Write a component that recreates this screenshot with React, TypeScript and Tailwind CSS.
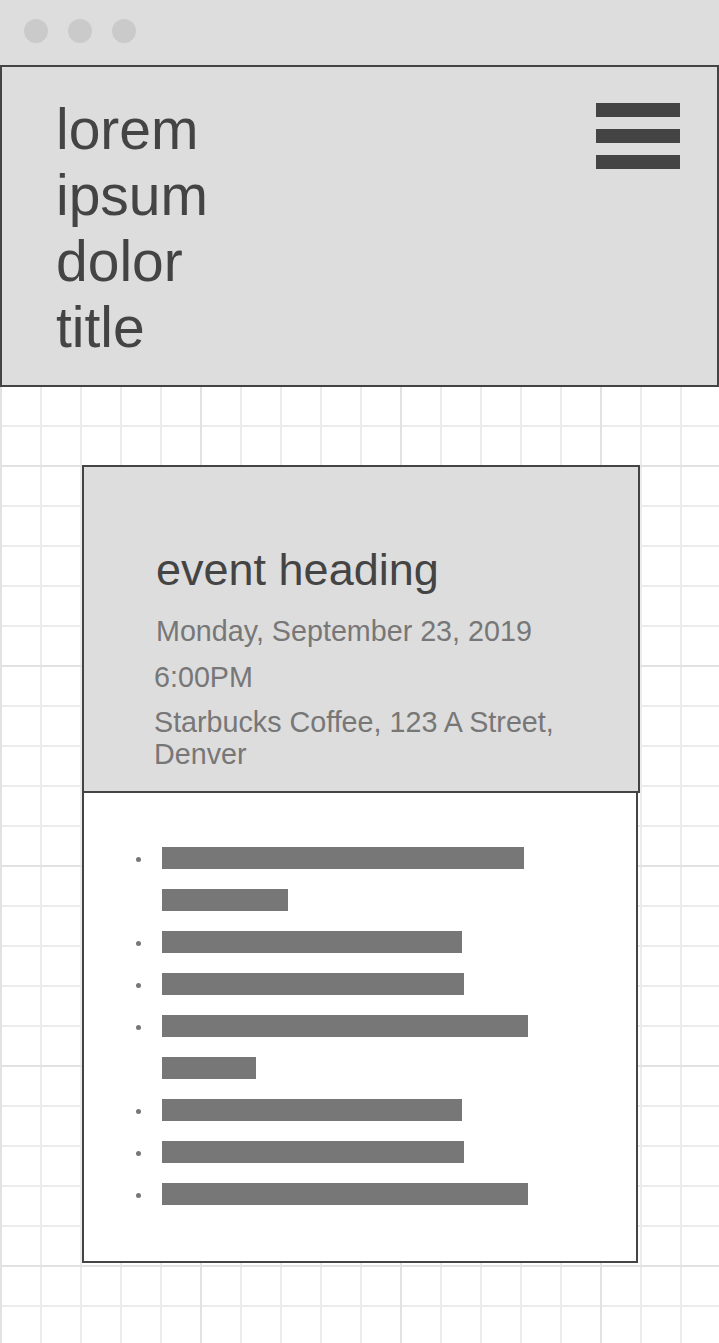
import React from 'react';

const bars: number[][] = [
  [362, 126],
  [300],
  [302],
  [366, 94],
  [300],
  [302],
  [366],
];

const App: React.FC = () => {
  return (
    <div className="min-h-screen flex flex-col bg-white font-['Liberation_Sans',Arial,sans-serif]">
      {/* Window chrome */}
      <div className="h-[65px] shrink-0 bg-[#dddddd] flex items-start gap-[20px] pl-[24px] pt-[19px]">
        <span className="w-[24px] h-[24px] rounded-full bg-[#cacaca]" />
        <span className="w-[24px] h-[24px] rounded-full bg-[#cacaca]" />
        <span className="w-[24px] h-[24px] rounded-full bg-[#cacaca]" />
      </div>

      <div className="flex-1 [background-image:linear-gradient(to_right,#e2e2e2_2px,transparent_2px),linear-gradient(to_bottom,#e2e2e2_2px,transparent_2px),linear-gradient(to_right,#ececec_2px,transparent_2px),linear-gradient(to_bottom,#ececec_2px,transparent_2px)] [background-size:200px_200px,200px_200px,40px_40px,40px_40px]">
        {/* Header */}
        <header className="h-[322px] bg-[#dddddd] border-2 border-[#444444] flex justify-between items-start pl-[54px] pr-[37px] pt-[29px]">
          <h1 className="w-[165px] text-[57px] leading-[66px] text-[#444444]">lorem ipsum dolor title</h1>
          <div className="mt-[7px] flex flex-col gap-[12px]">
            <span className="block w-[84px] h-[14px] bg-[#444444]" />
            <span className="block w-[84px] h-[14px] bg-[#444444]" />
            <span className="block w-[84px] h-[14px] bg-[#444444]" />
          </div>
        </header>

        {/* Event card */}
        <div className="ml-[82px] mt-[78px] pb-[80px]">
          <div className="w-[558px] bg-[#dddddd] border-2 border-[#444444] pt-[77px] pb-[21px] pl-[70px] pr-[30px]">
            <h2 className="ml-[2px] text-[45px] leading-[52px] text-[#444444]">event heading</h2>
            <p className="ml-[2px] mt-[19px] text-[28.7px] leading-[32px] text-[#777777]">Monday, September 23, 2019</p>
            <p className="mt-[14px] text-[28.7px] leading-[32px] text-[#777777]">6:00PM</p>
            <p className="mt-[13px] text-[28.7px] leading-[32px] text-[#777777]">Starbucks Coffee, 123 A Street, Denver</p>
          </div>
          <ul className="w-[556px] bg-white border-2 border-t-0 border-[#444444] pt-[44px] pb-[46px] pl-[52px]">
            {bars.map((row, i) => (
              <li key={i} className="flex items-start">
                <span className="mt-[20px] w-[5px] h-[5px] rounded-full bg-[#777777] shrink-0" />
                <div className="ml-[21px] flex flex-col">
                  {row.map((w, j) => (
                    <div key={j} className="h-[42px] flex items-center">
                      <span className="block h-[22px] bg-[#777777]" style={{ width: w }} />
                    </div>
                  ))}
                </div>
              </li>
            ))}
          </ul>
        </div>
      </div>
    </div>
  );
};

export default App;
